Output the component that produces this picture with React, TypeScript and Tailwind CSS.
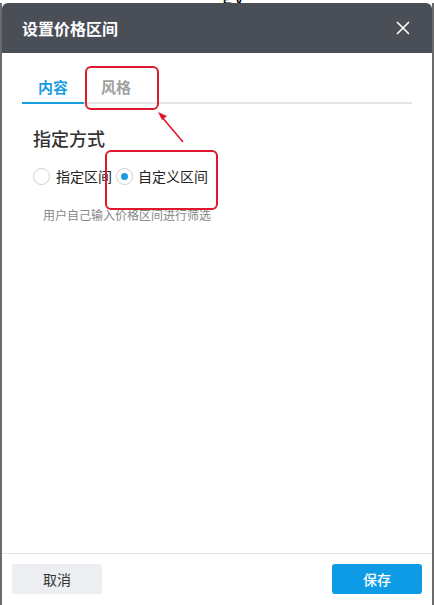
import React from "react";

export default function App() {
  const font = { fontFamily: '"Noto Sans CJK SC", "Noto Sans", sans-serif' };
  return (
    <div className="relative w-[434px] h-[605px] overflow-hidden bg-white" style={font}>
      {/* background text sliver */}
      <div className="absolute left-[222px] top-[-14px] text-[20px] text-black leading-none">gy</div>
      <div className="absolute left-0 top-[3px] bottom-0 w-[2px] bg-[#6b6b6b]" />
      <div className="absolute right-0 top-[3px] bottom-0 w-[2px] bg-[#6b6b6b]" />
      <div className="absolute left-[2px] right-[2px] top-[3px] bottom-0 flex flex-col rounded-t-[6px] overflow-hidden bg-white">
        {/* header */}
        <div className="h-[50px] shrink-0 bg-[#4a4f57] flex items-center justify-between pl-[20px] pr-[22px]">
          <span className="text-white text-[16px] font-bold">设置价格区间</span>
          <svg width="14" height="14" viewBox="0 0 14 14" fill="none" stroke="white" strokeWidth="1.6">
            <path d="M1 1L13 13M13 1L1 13" />
          </svg>
        </div>
        {/* body */}
        <div className="flex-1 pl-[20px] pr-[20px] pt-[23px]">
          <div className="flex border-b-2 border-[#e6e6e6]">
            <div className="w-[62px] flex justify-center pb-[4px] -mb-[2px] border-b-2 border-[#1a9de0]">
              <span className="text-[15px] font-bold text-[#1a9de0] leading-[22px]">内容</span>
            </div>
            <div className="w-[64px] flex justify-center pb-[4px]">
              <span className="text-[15px] font-bold text-[#a0a0a0] leading-[22px]">风格</span>
            </div>
          </div>
          <div className="pl-[11px] pt-[21px]">
            <div className="text-[18px] text-[#333] font-medium leading-[26px]">指定方式</div>
            <div className="flex items-center mt-[14px] h-[22px]">
              <span className="w-[17px] h-[17px] rounded-full border border-[#cfcfcf] bg-white" />
              <span className="ml-[6px] text-[14px] text-[#222]">指定区间</span>
              <span className="ml-[4px] w-[17px] h-[17px] rounded-full border border-[#cfcfcf] bg-white flex items-center justify-center">
                <span className="w-[7px] h-[7px] rounded-full bg-[#1a9de0]" />
              </span>
              <span className="ml-[5px] text-[14px] text-[#222]">自定义区间</span>
            </div>
            <div className="mt-[20px] pl-[10px] text-[12px] text-[#888] leading-[16px]">用户自己输入价格区间进行筛选</div>
          </div>
        </div>
        {/* footer */}
        <div className="h-[52px] shrink-0 border-t border-[#e5e5e5] flex items-start justify-between px-[10px] pt-[10px]">
          <button className="w-[90px] h-[30px] rounded-[3px] bg-[#eceef2] text-[14px] text-[#333]">取消</button>
          <button className="w-[90px] h-[30px] rounded-[3px] bg-[#0e9be6] text-[14px] text-white font-medium">保存</button>
        </div>
      </div>
      {/* annotations */}
      <div className="absolute left-[85px] top-[66px] w-[74px] h-[44px] rounded-[6px] border-2 border-[#e0182d]" />
      <div className="absolute left-[105px] top-[150px] w-[113px] h-[60px] rounded-[6px] border-2 border-[#e0182d]" />
      <svg className="absolute left-0 top-0" width="434" height="605" viewBox="0 0 434 605" fill="none">
        <path d="M183 142L161 116" stroke="#e0182d" strokeWidth="1.6" />
        <path d="M158 112L167 116L162 120Z" fill="#e0182d" />
      </svg>
    </div>
  );
}
